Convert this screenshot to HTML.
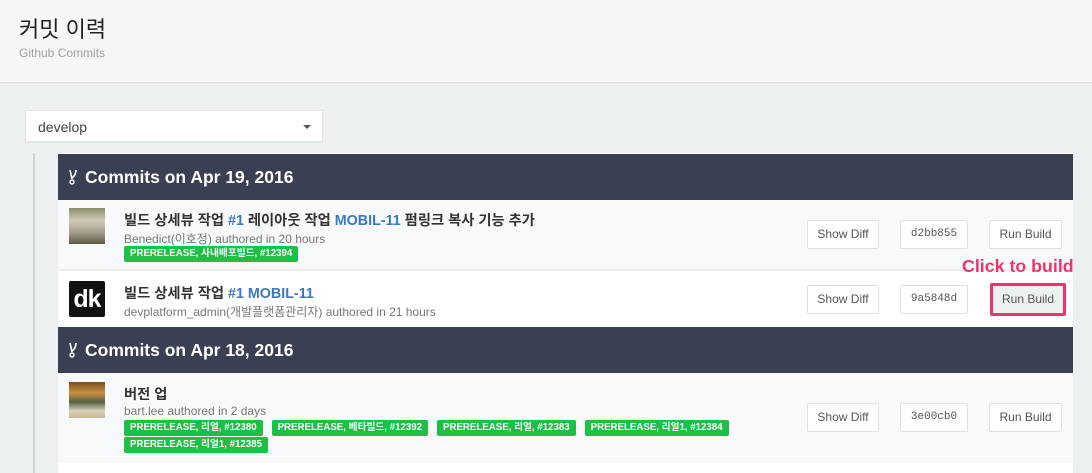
<!DOCTYPE html>
<html><head><meta charset="utf-8"><style>
*{box-sizing:border-box;margin:0;padding:0}
body{width:1092px;height:464px;overflow:hidden;background:#edf0f1;font-family:"Liberation Sans","Noto Sans CJK KR",sans-serif;position:relative}
.hdr{position:absolute;left:0;top:0;width:1092px;height:83px;background:#f5f6f6;border-bottom:1px solid #dfe2e4}
.hdr h1{position:absolute;left:19px;top:17px;font-size:22px;font-weight:normal;color:#222;line-height:26px}
.hdr p{position:absolute;left:19px;top:46px;font-size:12px;color:#9aa2a8;line-height:14px}
.sel{position:absolute;left:25px;top:110px;width:298px;height:32px;background:#fff;border:1px solid #e2e5e7;box-shadow:0 1px 1px rgba(0,0,0,.05);font-size:14px;color:#444;padding:8px 12px}
.sel:after{content:"";position:absolute;right:11px;top:14px;border-left:4px solid transparent;border-right:4px solid transparent;border-top:4px solid #555}
.vl{position:absolute;left:33px;top:153px;width:2px;height:320px;background:#d0d3d6}
.panel{position:absolute;left:58px;top:153px;width:1015px;height:320px;background:#fff}
.dh{position:absolute;left:0;width:1015px;height:46px;background:#3a3f51;color:#fff;font-weight:bold;font-size:17.5px;padding:13px 0 0 27px}
.dh svg{position:absolute;left:10px;top:15px}
.row{position:absolute;left:0;width:1015px}
.av{position:absolute;left:11px;width:36px;height:36px}
.t{position:absolute;left:66px;font-size:14.3px;font-weight:bold;color:#333}
.t b{color:#3a78c3}
.a{position:absolute;left:66px;font-size:12px;color:#777}
.bd{position:absolute;left:66px;width:700px;font-size:0}
.bd span{display:inline-block;background:#1dbf44;color:#fff;font-size:9.7px;font-weight:bold;padding:3px 6px;border-radius:2px;margin:0 9px 1px 0;height:16px;line-height:10px}
.btn{position:absolute;height:29px;border:1px solid #dfe2e4;background:#fff;font-size:12px;color:#555;text-align:center;line-height:27px;border-radius:2px}
.mono{font-family:"Liberation Mono",monospace;font-size:11px}
</style></head><body>
<div class="hdr"><h1>커밋 이력</h1><p>Github Commits</p></div>
<div class="sel">develop</div>
<div class="vl"></div>
<div class="panel">
<div class="dh" style="top:1px"><svg width="10" height="16" viewBox="0 0 10 16"><path d="M2 1 L4 10 M8 1 Q8 6 4 9" stroke="#fff" stroke-width="1.6" fill="none"/><circle cx="4" cy="13" r="2" stroke="#fff" stroke-width="1.4" fill="none"/></svg>Commits on Apr 19, 2016</div>
<div class="row" style="top:47px;height:71px;background:#f8f9fa;border-bottom:2px solid #eceff1">
<div class="av" style="top:8px;background:linear-gradient(180deg,#8a8f6a 0%,#cfc8b8 35%,#a29a88 70%,#5a5a4a 100%)"></div>
<div class="t" style="top:9px">빌드 상세뷰 작업 <b>#1</b> 레이아웃 작업 <b>MOBIL-11</b> 펌링크 복사 기능 추가</div>
<div class="a" style="top:30px">Benedict(이호정) authored in 20 hours</div>
<div class="bd" style="top:46px"><span>PRERELEASE, 사내배포빌드, #12394</span></div>
<div class="btn" style="left:749px;top:20px;width:72px">Show Diff</div>
<div class="btn mono" style="left:842px;top:20px;width:68px">d2bb855</div>
<div class="btn" style="left:931px;top:20px;width:73px">Run Build</div>
</div>
<div class="row" style="top:120px;height:54px;background:#fff">
<div class="av" style="top:8px;background:#111;border-radius:2px;color:#fff;font-weight:bold;font-size:25px;line-height:36px;text-align:center;letter-spacing:-1px">dk</div>
<div class="t" style="top:9px">빌드 상세뷰 작업 <b>#1 MOBIL-11</b></div>
<div class="a" style="top:30px">devplatform_admin(개발플랫폼관리자) authored in 21 hours</div>
<div class="btn" style="left:749px;top:12px;width:72px">Show Diff</div>
<div class="btn mono" style="left:842px;top:12px;width:68px">9a5848d</div>
<div class="btn" style="left:932px;top:10px;width:76px;height:33px;border:3px solid #f0336b;background:#edf0f1;line-height:27px">Run Build</div>
</div>
<div class="dh" style="top:174px"><svg width="10" height="16" viewBox="0 0 10 16"><path d="M2 1 L4 10 M8 1 Q8 6 4 9" stroke="#fff" stroke-width="1.6" fill="none"/><circle cx="4" cy="13" r="2" stroke="#fff" stroke-width="1.4" fill="none"/></svg>Commits on Apr 18, 2016</div>
<div class="row" style="top:220px;height:90px;background:#f8f9fa">
<div class="av" style="top:9px;background:linear-gradient(180deg,#7a5020 0%,#c89040 30%,#556040 55%,#d8d0b8 80%,#c8b898 100%)"></div>
<div class="t" style="top:10px">버전 업</div>
<div class="a" style="top:31px">bart.lee authored in 2 days</div>
<div class="bd" style="top:47px"><span>PRERELEASE, 리얼, #12380</span><span>PRERELEASE, 베타빌드, #12392</span><span>PRERELEASE, 리얼, #12383</span><span>PRERELEASE, 리얼1, #12384</span><br><span>PRERELEASE, 리얼1, #12385</span></div>
<div class="btn" style="left:749px;top:30px;width:72px">Show Diff</div>
<div class="btn mono" style="left:842px;top:30px;width:68px">3e00cb0</div>
<div class="btn" style="left:931px;top:30px;width:73px">Run Build</div>
</div>
</div>
<div style="position:absolute;left:962px;top:256px;font-size:17.8px;font-weight:bold;color:#f0336b;text-shadow:0 0 2px #fff,0 0 2px #fff">Click to build</div>
</body></html>
